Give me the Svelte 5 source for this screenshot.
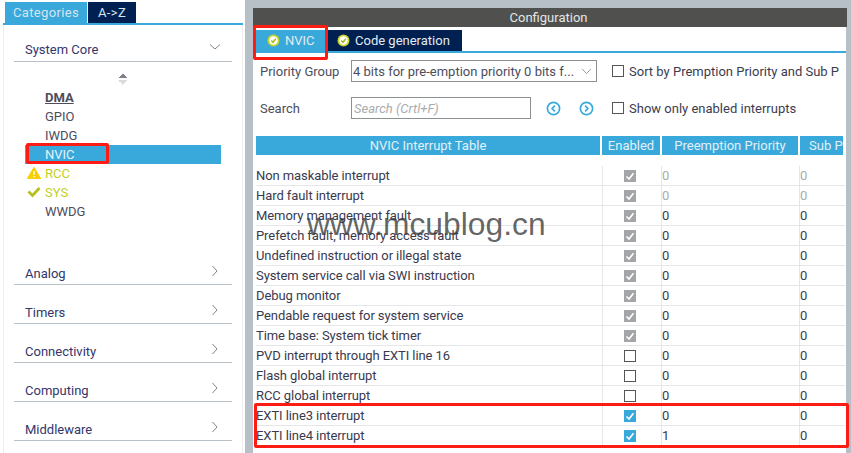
<script>
  const modules = ["DMA", "GPIO", "IWDG", "NVIC", "RCC", "SYS", "WWDG"];
  const groups = ["Analog", "Timers", "Connectivity", "Computing", "Middleware"];
  // state: g = greyed check, o = empty, b = blue check
  const rows = [
    ["Non maskable interrupt", "g", "0", "0", true],
    ["Hard fault interrupt", "g", "0", "0", true],
    ["Memory management fault", "g", "0", "0"],
    ["Prefetch fault, memory access fault", "g", "0", "0"],
    ["Undefined instruction or illegal state", "g", "0", "0"],
    ["System service call via SWI instruction", "g", "0", "0"],
    ["Debug monitor", "g", "0", "0"],
    ["Pendable request for system service", "g", "0", "0"],
    ["Time base: System tick timer", "g", "0", "0"],
    ["PVD interrupt through EXTI line 16", "o", "0", "0"],
    ["Flash global interrupt", "o", "0", "0"],
    ["RCC global interrupt", "o", "0", "0"],
    ["EXTI line3 interrupt", "b", "0", "0"],
    ["EXTI line4 interrupt", "b", "1", "0"]
  ];
</script>

{#snippet okIcon()}
  <svg class="ok" viewBox="0 0 13 13" width="13" height="13">
    <circle cx="6.5" cy="6.5" r="6" fill="#c8d42a" />
    <circle cx="6.5" cy="6.5" r="4.2" fill="#fff" />
    <polyline points="4.2,6.5 6,8.3 8.8,4.8" fill="none" stroke="#a9b81c" stroke-width="1.5" />
  </svg>
{/snippet}

<div class="screen">
  <aside class="side">
    <div class="side-tabs">
      <span class="side-tab active">Categories</span>
      <span class="side-tab">A-&gt;Z</span>
    </div>
    <div class="side-panel">
      <div class="group open">
        <span>System Core</span>
        <svg viewBox="0 0 12 12" width="12" height="12"><polyline points="1,3.5 6,8 11,3.5" /></svg>
      </div>
      <div class="sorter"></div>
      <ul class="modules">
        {#each modules as m}
          <li class:sel={m === "NVIC"} class:warn={m === "RCC"} class:good={m === "SYS"} class:dma={m === "DMA"}>
            {#if m === "RCC"}
              <svg viewBox="0 0 14 12" width="14" height="12">
                <path d="M7 .3 13.8 11.7H.2Z" fill="#f7cf00" stroke="#f7cf00" stroke-linejoin="round" />
                <rect x="6.4" y="4" width="1.3" height="4" fill="#fff" />
                <rect x="6.4" y="9" width="1.3" height="1.3" fill="#fff" />
              </svg>
            {:else if m === "SYS"}
              <svg viewBox="0 0 14 12" width="14" height="12">
                <polyline points="1.5,5.5 5.5,9.5 12.5,2" fill="none" stroke="#b5c21a" stroke-width="2.8" />
              </svg>
            {/if}
            <span>{m}</span>
          </li>
        {/each}
      </ul>
      <div class="closed">
        {#each groups as g}
          <div class="group">
            <span>{g}</span>
            <svg viewBox="0 0 12 12" width="12" height="12"><polyline points="3.5,1 8,6 3.5,11" /></svg>
          </div>
        {/each}
      </div>
    </div>
  </aside>

  <main class="config">
    <div class="title">Configuration</div>
    <div class="body">
      <div class="tabs">
        <span class="tab active">{@render okIcon()}NVIC</span>
        <span class="tab">{@render okIcon()}Code generation</span>
      </div>
      <div class="form">
        <div class="line">
          <span class="lbl">Priority Group</span>
          <div class="select">
            <span>4 bits for pre-emption priority 0 bits f...</span>
            <svg viewBox="0 0 12 8" width="11" height="7"><polyline points="1,1 6,6.5 11,1" /></svg>
          </div>
          <span class="check-line"><i class="box o"></i><span>Sort by Premption Priority and Sub P</span></span>
        </div>
        <div class="line second">
          <span class="lbl">Search</span>
          <div class="search">Search (Crtl+F)</div>
          <div class="arrows">
            <svg viewBox="0 0 16 16" width="15" height="15"><circle cx="8" cy="8" r="6.5" /><polyline points="9.5,5 6.5,8 9.5,11" /></svg>
            <svg viewBox="0 0 16 16" width="15" height="15"><circle cx="8" cy="8" r="6.5" /><polyline points="6.5,5 9.5,8 6.5,11" /></svg>
          </div>
          <span class="check-line"><i class="box o"></i>Show only enabled interrupts</span>
        </div>
      </div>
      <div class="table">
        <div class="row head">
          <div>NVIC Interrupt Table</div>
          <div>Enabled</div>
          <div>Preemption Priority</div>
          <div class="clip">Sub P</div>
        </div>
        {#each rows as r}
          <div class="row" class:fixed={r[4]}>
            <div class="name">{r[0]}</div>
            <div class="en">
              <i class="box {r[1]}">
                {#if r[1] !== "o"}
                  <svg viewBox="0 0 12 12" width="12" height="12"><polyline points="2.5,6.5 5,9 9.5,3.2" /></svg>
                {/if}
              </i>
            </div>
            <div class="num">{r[2]}</div>
            <div class="num">{r[3]}</div>
          </div>
        {/each}
      </div>
    </div>
  </main>

  <div class="mark mark-side"></div>
  <div class="mark mark-tab"></div>
  <div class="mark mark-rows"></div>
  <div class="watermark">www.mcublog.cn</div>
</div>

<style>
  :global(body) {
    margin: 0;
  }
  .screen {
    position: relative;
    width: 851px;
    height: 453px;
    overflow: hidden;
    display: flex;
    background: #fff;
    font-family: Roboto, "Liberation Sans", sans-serif;
    font-size: 13px;
    color: #39394f;
  }
  .side {
    width: 245px;
    flex: none;
    padding: 2px 2px 0 3px;
    box-sizing: border-box;
  }
  .side-tabs {
    display: flex;
    gap: 1px;
    padding-left: 2px;
    border-bottom: 2px solid #39a9db;
  }
  .side-tab {
    height: 21px;
    line-height: 21px;
    width: 48px;
    text-align: center;
    background: #002052;
    color: #d5e4ee;
    letter-spacing: 0.35px;
  }
  .side-tab.active {
    width: 82px;
    background: #39a9db;
  }
  .side-panel {
    height: 428px;
    box-sizing: border-box;
    border-left: 1px solid #eceeef;
    border-right: 1px solid #eceeef;
    padding: 0 10px;
  }
  .group {
    height: 39px;
    box-sizing: border-box;
    border-bottom: 1px solid #b9c2c9;
    display: flex;
    align-items: flex-end;
    justify-content: space-between;
    padding: 0 11px 3px 11px;
    font-size: 13px;
    color: #33366b;
  }
  .group.open {
    height: 37px;
    padding-bottom: 4px;
  }
  .group svg {
    margin-bottom: 4px;
  }
  .group polyline {
    fill: none;
    stroke: #7f8589;
    stroke-width: 1;
  }
  .sorter {
    width: 9px;
    height: 12px;
    margin: 11px 0 0 104px;
    background:
      linear-gradient(135deg, transparent 50%, #7d8388 50%) 0 0 / 5px 5px no-repeat,
      linear-gradient(225deg, transparent 50%, #7d8388 50%) 4px 0 / 5px 5px no-repeat,
      linear-gradient(45deg, transparent 50%, #d9dcde 50%) 0 7px / 5px 5px no-repeat,
      linear-gradient(315deg, transparent 50%, #d9dcde 50%) 4px 7px / 5px 5px no-repeat;
  }
  .modules {
    list-style: none;
    margin: 3px 0 0 11px;
    padding: 0;
    width: 196px;
  }
  .modules li {
    position: relative;
    height: 19px;
    line-height: 19px;
    padding-left: 20px;
    font-size: 13px;
    color: #4d4d5c;
  }
  .modules li svg {
    position: absolute;
    left: 2px;
    top: 3px;
  }
  .modules .dma {
    font-weight: bold;
    text-decoration: underline;
  }
  .modules .sel {
    background: #39a9db;
    color: #e6f2f8;
  }
  .modules .warn,
  .modules .good {
    color: #c3cf1f;
  }
  .closed {
    margin-top: 25px;
  }
  .config {
    flex: 1;
    background: #b6c0c6;
    padding: 8px 5px 0 8px;
    min-width: 0;
  }
  .title {
    height: 19px;
    line-height: 19px;
    background: #50514f;
    color: #e4e6e6;
    text-align: center;
    margin-right: -1px;
    padding-right: 3px;
  }
  .body {
    background: #fff;
    height: 426px;
    overflow: hidden;
  }
  .tabs {
    height: 21px;
    padding: 3px 0 0 3px;
    display: flex;
    border-bottom: 2px solid #39a9db;
    align-items: stretch;
  }
  .tab {
    width: 136px;
    background: #002052;
    color: #e3ebef;
    display: flex;
    align-items: center;
    gap: 5px;
    padding-left: 11px;
    box-sizing: border-box;
  }
  .tab.active {
    width: 70px;
    background: #39a9db;
  }
  .form {
    padding: 7px 0 0 7px;
  }
  .line {
    display: flex;
    align-items: center;
    height: 22px;
    white-space: nowrap;
  }
  .line.second {
    margin-top: 15px;
  }
  .lbl {
    width: 91px;
    flex: none;
    color: #4d4d5c;
  }
  .select,
  .search {
    width: 246px;
    flex: none;
    height: 22px;
    box-sizing: border-box;
    border: 1px solid #8b9093;
    display: flex;
    align-items: center;
    justify-content: space-between;
    padding: 0 4px 0 1px;
    color: #4d4d5c;
  }
  .select polyline {
    fill: none;
    stroke: #8b9093;
  }
  .search {
    width: 180px;
    padding-left: 2px;
    font-style: italic;
    color: #a9acae;
  }
  .check-line {
    display: flex;
    align-items: center;
    margin-left: 15px;
    color: #3c3c50;
  }
  .check-line .box {
    margin-right: 5px;
  }
  .arrows {
    display: flex;
    gap: 18px;
    margin: 0 0 0 15px;
    width: 66px;
    flex: none;
  }
  .arrows circle,
  .arrows polyline {
    fill: none;
    stroke: #39a9db;
    stroke-width: 1.8;
  }
  .second .check-line {
    margin-left: 0;
  }
  .box {
    display: inline-flex;
    flex: none;
    width: 12px;
    height: 12px;
    box-sizing: border-box;
  }
  .box.o {
    border: 1px solid #555;
  }
  .box.g {
    background: #a3a5a8;
  }
  .box.b {
    background: #39a9db;
  }
  .box polyline {
    fill: none;
    stroke: #fff;
    stroke-width: 1.6;
  }
  .table {
    margin: 17px 0 0 3px;
    width: 589px;
  }
  .row {
    display: grid;
    grid-template-columns: 346px 60px 138px 43px;
    height: 20px;
    box-sizing: border-box;
    border-bottom: 1px solid #e4e6e7;
    line-height: 19px;
    color: #3a3a4e;
  }
  .row.head {
    height: 19px;
    margin-bottom: 11px;
    border: 0;
    line-height: 19px;
  }
  .head div {
    background: #39a9db;
    color: #e3f0f7;
    text-align: center;
    border-right: 2px solid #fff;
    overflow: hidden;
    white-space: nowrap;
  }
  .head .clip {
    border: 0;
    text-align: left;
    padding-left: 9px;
  }
  .name {
    letter-spacing: -0.08px;
    white-space: nowrap;
  }
  .en {
    display: flex;
    align-items: center;
    justify-content: center;
    padding-right: 4px;
    border-left: 1px solid #e4e6e7;
    border-right: 1px solid #e4e6e7;
  }
  .num {
    border-right: 1px solid #e4e6e7;
  }
  .num:last-child {
    border: 0;
  }
  .fixed .num {
    color: #a9acae;
  }
  .mark {
    position: absolute;
    box-sizing: border-box;
    border: 3px solid #fc1c14;
    border-radius: 2px;
  }
  .mark-side {
    left: 26px;
    top: 143px;
    width: 83px;
    height: 21px;
  }
  .mark-tab {
    left: 253px;
    top: 25px;
    width: 75px;
    height: 35px;
  }
  .mark-rows {
    left: 254px;
    top: 403px;
    width: 595px;
    height: 45px;
  }
  .watermark {
    position: absolute;
    left: 307px;
    top: 203px;
    font-family: "Liberation Sans", sans-serif;
    font-size: 31.8px;
    line-height: 42px;
    color: rgba(60, 60, 60, 0.78);
    white-space: nowrap;
  }
</style>
